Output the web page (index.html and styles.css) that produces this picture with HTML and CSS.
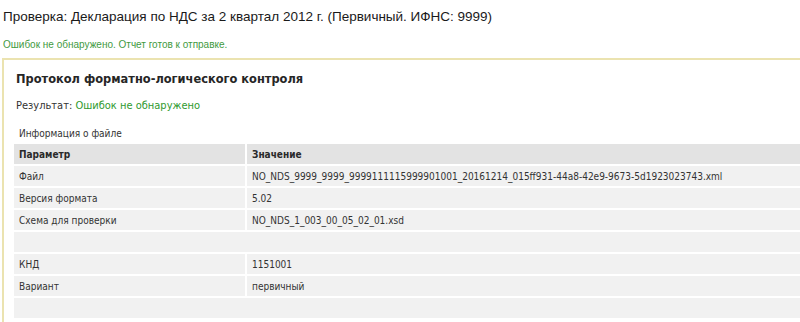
FILE: index.html
```html
<!DOCTYPE html>
<html lang="ru">
<head>
    <meta charset="UTF-8">
    <title>Проверка декларации</title>
    <link rel="stylesheet" href="styles.css">
</head>
<body>

    <div class="page-head">
        <h1 class="page-title">Проверка: Декларация по НДС за 2 квартал 2012 г. (Первичный. ИФНС: 9999)</h1>
        <p class="status-ok">Ошибок не обнаружено. Отчет готов к отправке.</p>
    </div>

    <div class="report">
        <h2 class="report-title">Протокол форматно-логического контроля</h2>
        <p class="result">Результат: <span class="result-ok">Ошибок не обнаружено</span></p>

        <div class="caption">Информация о файле</div>
        <table class="info">
            <tr>
                <th class="col-param">Параметр</th>
                <th>Значение</th>
            </tr>
            <tr>
                <td>Файл</td>
                <td>NO_NDS_9999_9999_9999111115999901001_20161214_015ff931-44a8-42e9-9673-5d1923023743.xml</td>
            </tr>
            <tr>
                <td>Версия формата</td>
                <td>5.02</td>
            </tr>
            <tr>
                <td>Схема для проверки</td>
                <td>NO_NDS_1_003_00_05_02_01.xsd</td>
            </tr>
            <tr>
                <td colspan="2"></td>
            </tr>
            <tr>
                <td>КНД</td>
                <td>1151001</td>
            </tr>
            <tr>
                <td>Вариант</td>
                <td>первичный</td>
            </tr>
            <tr>
                <td colspan="2"></td>
            </tr>
        </table>
    </div>

</body>
</html>
```

FILE: styles.css
```css
body {
    margin: 0;
    background: #ffffff;
    font-family: 'Liberation Sans', Arial, sans-serif;
    color: #222;
    overflow: hidden;
}

.page-head {
    padding: 8px 3px 0 3px;
}

.page-title {
    margin: 0;
    font-size: 13.5px;
    font-weight: normal;
    line-height: 18px;
    color: #1a1a1a;
}

.status-ok {
    margin: 13px 0 0 0;
    font-size: 10px;
    line-height: 12px;
    color: #3f9a3f;
}

.report {
    margin: 7px 0 0 2px;
    padding: 11px 0 2px 12px;
    border-top: 2px solid #ebe3b0;
    border-left: 2px solid #ebe3b0;
    border-bottom: 1px solid #e3e8f0;
    font-family: 'DejaVu Sans Condensed', 'DejaVu Sans', sans-serif;
}

.report-title {
    margin: 0;
    font-size: 12.7px;
    font-weight: bold;
    line-height: 16px;
    color: #262626;
}

.result {
    margin: 12px 0 0 0;
    font-size: 11px;
    line-height: 14px;
    color: #333;
}

.result-ok {
    color: #2f9a2f;
}

.caption {
    margin: 15px 0 0 3px;
    font-size: 10px;
    line-height: 12px;
    color: #333;
}

.info {
    margin: 2px 0 0 -4px;
    width: 820px;
    border-collapse: separate;
    border-spacing: 2px;
    font-size: 10px;
    color: #333;
}

.info th,
.info td {
    height: 20px;
    padding: 0 5px;
    text-align: left;
    white-space: nowrap;
    background: #f1f1f1;
}

.info th {
    background: #e3e3e3;
    font-weight: bold;
    color: #2a2a2a;
}

.col-param {
    width: 221px;
}
```
